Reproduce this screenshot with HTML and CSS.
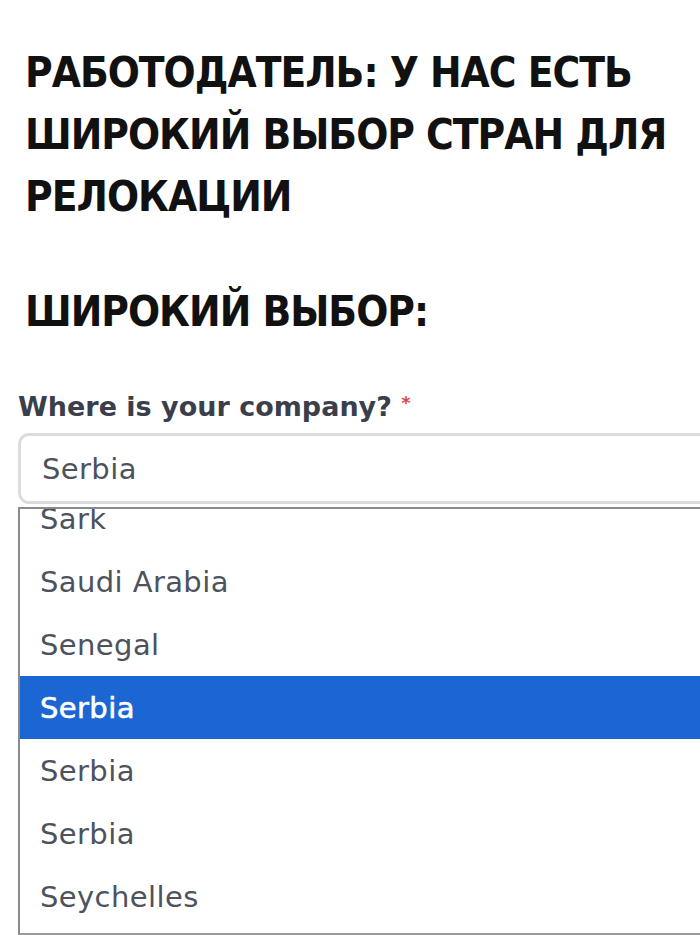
FILE: index.html
```html
<!DOCTYPE html>
<html lang="ru">
<head>
<meta charset="utf-8">
<link rel="stylesheet" href="styles.css">
</head>
<body>
<main class="page">
  <h1 class="title">РАБОТОДАТЕЛЬ: У НАС ЕСТЬ<br>ШИРОКИЙ ВЫБОР СТРАН ДЛЯ<br>РЕЛОКАЦИИ</h1>
  <h2 class="subtitle">ШИРОКИЙ ВЫБОР:</h2>
  <section class="field">
    <label class="label">Where is your company? <span class="req">*</span></label>
    <div class="select">Serbia</div>
    <div class="dropdown">
      <ul class="options">
        <li class="option">Sark</li>
        <li class="option">Saudi Arabia</li>
        <li class="option">Senegal</li>
        <li class="option selected">Serbia</li>
        <li class="option">Serbia</li>
        <li class="option">Serbia</li>
        <li class="option">Seychelles</li>
      </ul>
    </div>
  </section>
</main>
</body>
</html>
```
FILE: styles.css
```css
html, body {
  margin: 0;
  padding: 0;
  background: #fff;
  overflow: hidden;
}
.page {
  width: 700px;
  height: 935px;
  overflow: hidden;
}
.title,
.subtitle {
  margin: 0;
  padding-left: 25px;
  font-family: "DejaVu Sans Condensed", "DejaVu Sans", sans-serif;
  font-weight: bold;
  font-size: 42px;
  letter-spacing: -1px;
  line-height: 62px;
  color: #111;
  white-space: nowrap;
}
.title {
  padding-top: 42px;
}
.subtitle {
  padding-top: 53px;
}
.field {
  padding: 46px 0 0 18px;
}
.label {
  display: block;
  font-family: "DejaVu Sans", sans-serif;
  font-weight: 700;
  font-size: 27px;
  line-height: 36px;
  color: #3b3f4b;
}
.req {
  color: #e04848;
  font-size: 18px;
  vertical-align: top;
  line-height: 28px;
}
.select {
  margin-top: 8px;
  width: 760px;
  height: 71px;
  box-sizing: border-box;
  border: 3px solid #dadce1;
  border-radius: 11px;
  padding-left: 21px;
  display: flex;
  align-items: center;
  font-family: "DejaVu Sans", sans-serif;
  font-size: 29px;
  letter-spacing: 0.4px;
  color: #4d525c;
}
.dropdown {
  margin-top: 3px;
  width: 760px;
  height: 428px;
  box-sizing: border-box;
  border-top: 2px solid #8a8a8a;
  border-left: 2px solid #8a8a8a;
  border-bottom: 2px solid #9a9a9a;
  overflow: hidden;
  background: #fff;
}
.options {
  list-style: none;
  margin: -22px 0 0 0;
  padding: 0;
}
.option {
  height: 63px;
  display: flex;
  align-items: center;
  padding-left: 20px;
  font-family: "DejaVu Sans", sans-serif;
  font-size: 29px;
  letter-spacing: 0.4px;
  color: #4d525c;
}
.option.selected {
  background: #1b66d2;
  color: #fff;
  -webkit-text-stroke: 0.6px #fff;
}
```
